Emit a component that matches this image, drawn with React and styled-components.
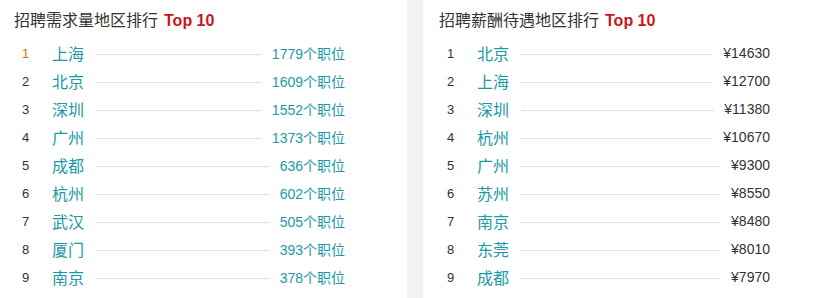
import styled, { createGlobalStyle } from "styled-components";

const GlobalStyle = createGlobalStyle`
  body {
    margin: 0;
    background: #fff;
    font-family: "Liberation Sans", Arial, "Noto Sans CJK SC", sans-serif;
  }
`;

const Page = styled.div`
  display: flex;
  width: 832px;
  height: 298px;
  overflow: hidden;
`;

const Panel = styled.div`
  width: ${(props) => props.width}px;
  padding: 8px 0 0 ${(props) => props.pad}px;
  box-sizing: border-box;
  background: #fff;
`;

const Divider = styled.div`
  width: 16px;
  background: #f2f2f2;
`;

const Title = styled.h3`
  margin: 0 0 5px;
  height: 26px;
  line-height: 26px;
  font-size: 16px;
  font-weight: normal;
  color: #333;
`;

const Red = styled.span`
  color: #c9161d;
  font-weight: bold;
  margin-left: 6px;
`;

const List = styled.ul`
  margin: 0;
  padding: 0 ${(props) => props.right}px 0 8px;
  list-style: none;
`;

const Row = styled.li`
  display: flex;
  align-items: center;
  height: 28px;
`;

const Rank = styled.span`
  width: 30px;
  font-size: 13px;
  color: ${(props) => (props.first ? "#d9700a" : "#333")};
`;

const City = styled.span`
  font-size: 16px;
  color: #1a9aa6;
`;

const Dots = styled.span`
  flex: 1;
  margin: 2px 11px 0 12px;
  border-top: 1px dotted #c8c8c8;
`;

const Value = styled.span`
  font-size: 14px;
  color: ${(props) => (props.teal ? "#1a9aa6" : "#333")};
`;

const demand = [
  ["上海", 1779], ["北京", 1609], ["深圳", 1552], ["广州", 1373], ["成都", 636],
  ["杭州", 602], ["武汉", 505], ["厦门", 393], ["南京", 378], ["苏州", 300],
];

const salary = [
  ["北京", 14630], ["上海", 12700], ["深圳", 11380], ["杭州", 10670], ["广州", 9300],
  ["苏州", 8550], ["南京", 8480], ["东莞", 8010], ["成都", 7970], ["武汉", 7800],
];

const App = () => {
  return (
    <Page>
      <GlobalStyle />
      <Panel width={407} pad={14}>
        <Title>招聘需求量地区排行<Red>Top 10</Red></Title>
        <List right={62}>
          {demand.map(([city, n], i) => (
            <Row key={city}>
              <Rank first={i === 0}>{i + 1}</Rank>
              <City>{city}</City>
              <Dots />
              <Value teal>{n}个职位</Value>
            </Row>
          ))}
        </List>
      </Panel>
      <Divider />
      <Panel width={409} pad={16}>
        <Title>招聘薪酬待遇地区排行<Red>Top 10</Red></Title>
        <List right={62}>
          {salary.map(([city, n], i) => (
            <Row key={city}>
              <Rank>{i + 1}</Rank>
              <City>{city}</City>
              <Dots />
              <Value>¥{n}</Value>
            </Row>
          ))}
        </List>
      </Panel>
    </Page>
  );
};

export default App;
